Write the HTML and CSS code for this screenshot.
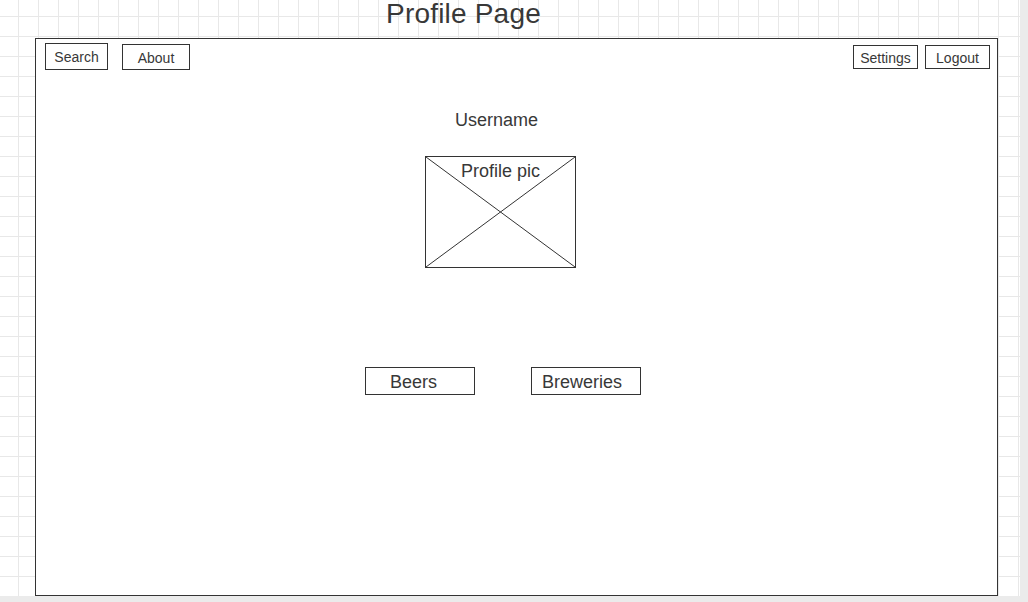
FILE: index.html
```html
<!DOCTYPE html>
<html lang="en">
<head>
<meta charset="utf-8">
<title>Profile Page</title>
<link rel="stylesheet" href="styles.css">
</head>
<body>
<div class="canvas">
  <h1 class="title">Profile Page</h1>
  <div class="frame">
    <div class="header">
      <div class="nav-left">
        <div class="btn btn-search">Search</div>
        <div class="btn btn-about">About</div>
      </div>
      <div class="nav-right">
        <div class="btn btn-small">Settings</div>
        <div class="btn btn-small">Logout</div>
      </div>
    </div>
    <div class="main">
      <div class="username">Username</div>
      <div class="pic">
        <svg class="pic-x" viewBox="0 0 149 110" preserveAspectRatio="none">
          <line x1="0" y1="0" x2="149" y2="110"></line>
          <line x1="0" y1="110" x2="149" y2="0"></line>
        </svg>
        <span class="pic-label">Profile pic</span>
      </div>
      <div class="tabs">
        <div class="tab tab-beers">Beers</div>
        <div class="tab tab-breweries">Breweries</div>
      </div>
    </div>
  </div>
</div>
</body>
</html>
```
FILE: styles.css
```css
html, body {
  margin: 0;
  padding: 0;
}
body {
  background: #ebebeb;
  font-family: "Liberation Sans", Arial, sans-serif;
  color: #383838;
}
.canvas {
  width: 1020px;
  height: 596px;
  overflow: hidden;
  background-color: #ffffff;
  background-image:
    linear-gradient(to right, #e8e8e8 1px, transparent 1px),
    linear-gradient(to bottom, #e8e8e8 1px, transparent 1px);
  background-size: 20px 20px;
  background-position: 18px 16px;
}
.title {
  margin: 0;
  height: 38px;
  padding-left: 386px;
  font-size: 28px;
  line-height: 27px;
  font-weight: normal;
  letter-spacing: 0.2px;
  box-sizing: border-box;
}
.frame {
  margin-left: 35px;
  width: 963px;
  height: 558px;
  box-sizing: border-box;
  border: 1px solid #333333;
  background: #ffffff;
}
.header {
  display: flex;
  justify-content: space-between;
  align-items: flex-start;
  padding: 4px 7px 0 9px;
}
.nav-left {
  display: flex;
  align-items: flex-start;
  gap: 14px;
}
.nav-right {
  display: flex;
  gap: 7px;
  margin-top: 2px;
}
.btn {
  box-sizing: border-box;
  border: 1px solid #333333;
  font-size: 14px;
  line-height: 16px;
  text-align: center;
  background: #ffffff;
}
.btn-search {
  width: 63px;
  height: 27px;
  padding-top: 5px;
}
.btn-about {
  width: 68px;
  height: 26px;
  padding-top: 5px;
  margin-top: 1px;
}
.btn-small {
  width: 65px;
  height: 24px;
  padding-top: 4px;
}
.main {
  display: flex;
  flex-direction: column;
  align-items: flex-start;
}
.username {
  margin-top: 40px;
  margin-left: 419px;
  font-size: 18px;
  line-height: 20px;
}
.pic {
  position: relative;
  margin-top: 26px;
  margin-left: 389px;
  width: 151px;
  height: 112px;
  box-sizing: border-box;
  border: 1px solid #333333;
  padding-top: 4px;
  text-align: center;
  font-size: 18px;
  line-height: 20px;
}
.pic-x {
  position: absolute;
  left: 0;
  top: 0;
  width: 100%;
  height: 100%;
}
.pic-x line {
  stroke: #333333;
  stroke-width: 1;
  vector-effect: non-scaling-stroke;
}
.pic-label {
  position: relative;
}
.tabs {
  display: flex;
  gap: 56px;
  margin-top: 99px;
  margin-left: 329px;
}
.tab {
  width: 110px;
  height: 28px;
  box-sizing: border-box;
  border: 1px solid #333333;
  padding-top: 4px;
  font-size: 18px;
  line-height: 20px;
}
.tab-beers {
  padding-left: 24px;
}
.tab-breweries {
  padding-left: 10px;
}
```
